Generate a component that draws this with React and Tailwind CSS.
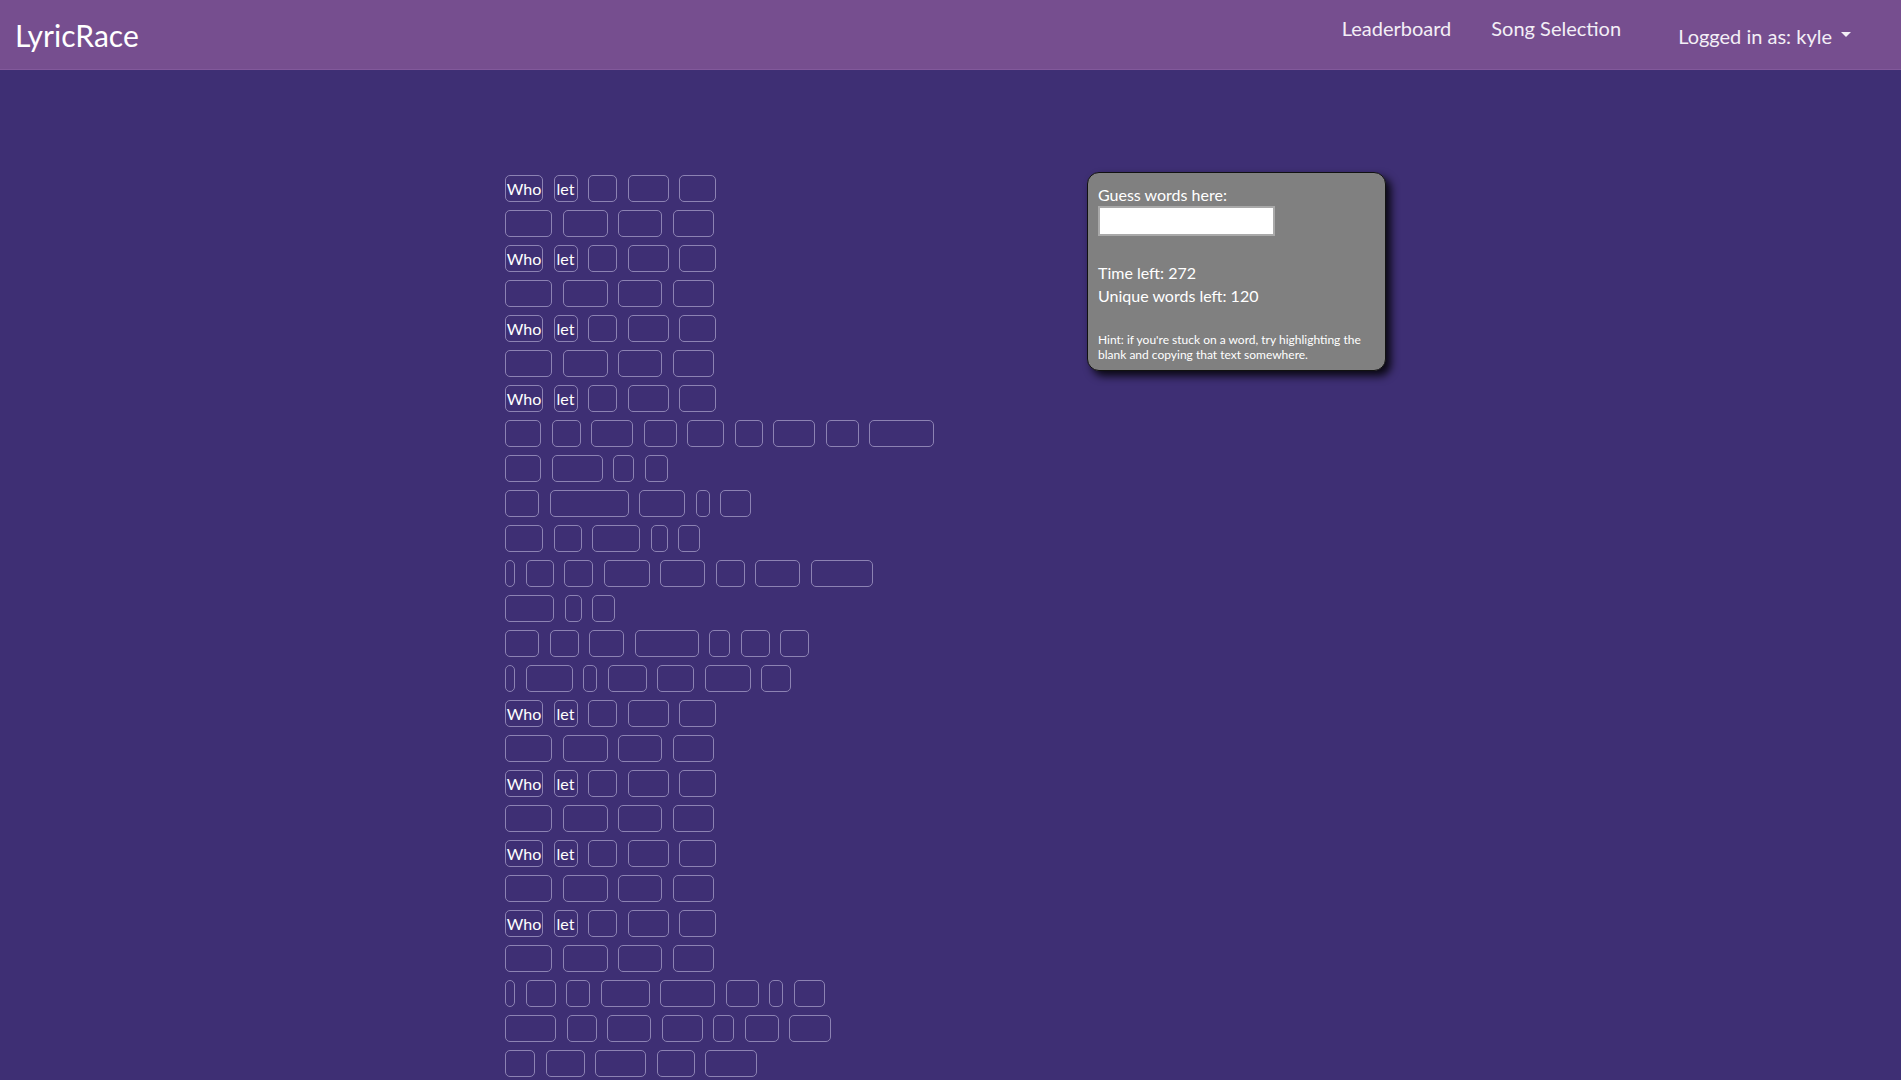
import React from 'react';

// word grid: W = "Who let" row, numbers = blank widths in px
const W = [{ t: 'Who', w: 38 }, { t: 'let', w: 24 }, 29, 41, 37];
const R2 = [47, 45, 44, 41];

const rows = [
  W, R2, W, R2, W, R2, W,
  [36, 29, 42, 33, 37, 28, 42, 33, 65],
  [36, 51, 21, 23],
  [34, 79, 46, 14, 31],
  [38, 28, 48, 17, 22],
  [10, 28, 29, 46, 45, 29, 45, 62],
  [49, 17, 23],
  [34, 29, 35, 64, 21, 29, 29],
  [10, 47, 14, 39, 37, 46, 30],
  W, R2, W, R2, W, R2, W, R2,
  [10, 30, 24, 49, 55, 33, 14, 31],
  [51, 30, 44, 41, 21, 34, 42],
  [30, 39, 51, 38, 52],
  [38, 46, 29, 41],
  [10, 28, 52, 36, 44, 29],
];

function Word({ item }) {
  const shown = typeof item === 'object';
  const w = shown ? item.w : item;
  return (
    <span
      className="h-[27px] shrink-0 rounded-[5px] border border-[#8c82b3] flex items-center justify-center text-[16px] text-white"
      style={{ width: w }}
    >
      {shown ? item.t : ''}
    </span>
  );
}

export default function App() {
  return (
    <div className="min-h-screen bg-[#3e2f74] font-['Lato','Segoe_UI',sans-serif]">
      {/* navbar */}
      <nav className="h-[70px] bg-[#764e8f] border-b border-[#82599b] flex items-center pl-[15px] pr-[50px]">
        <span className="text-[30px] text-white leading-[34px] mt-[1px]">LyricRace</span>
        <div className="ml-auto self-start pt-[16px] flex gap-[40px] text-[20px] leading-[24px] text-[#f3eef6]">
          <span>Leaderboard</span>
          <span>Song Selection</span>
        </div>
        <div className="ml-[57px] mt-[3px] flex items-center text-[20px] leading-[24px] text-[#f3eef6]">
          <span>Logged in as: kyle</span>
          <span className="ml-[9px] mb-[3px] border-t-[5px] border-x-[5px] border-t-[#f3eef6] border-x-transparent" />
        </div>
      </nav>

      <main className="flex items-start pl-[505px] pt-[102px]">
        {/* lyrics */}
        <div className="w-[582px] pt-[3px] flex flex-col gap-[8px]">
          {rows.map((row, i) => (
            <div key={i} className="flex gap-[10.5px]">
              {row.map((item, j) => (
                <Word key={j} item={item} />
              ))}
            </div>
          ))}
        </div>

        {/* guess panel */}
        <div className="w-[299px] bg-[#808080] border border-[#111] rounded-[12px] shadow-[5px_5px_8px_rgba(0,0,0,0.85)] px-[10px] pt-[10px] pb-[8px] text-white">
          <div className="text-[16px] leading-[23px]">Guess words here:</div>
          <input
            type="text"
            className="block w-[177px] h-[30px] bg-white border-2 border-[#a9a9a9] outline-none"
          />
          <div className="mt-[25px] text-[16px] leading-[23px]">Time left: 272</div>
          <div className="text-[16px] leading-[23px]">Unique words left: 120</div>
          <p className="mt-[25px] text-[12px] leading-[15px]">
            Hint: if you're stuck on a word, try highlighting the blank and copying that text somewhere.
          </p>
        </div>
      </main>
    </div>
  );
}
